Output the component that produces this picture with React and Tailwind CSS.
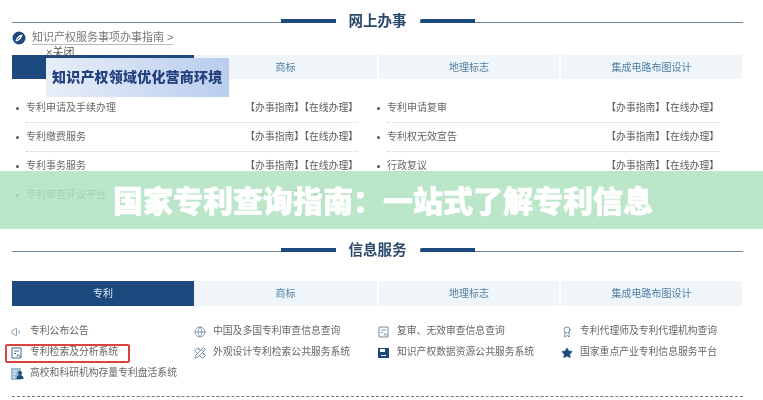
import { Volume1, Globe, PencilRuler, Award, Star } from "lucide-react";

const tabs = [
  ["专利", "w-[182px] bg-[#1c4a7e] text-[#dfe8f2]"],
  ["商标", "w-[183px] bg-[#f0f5f9] text-[#4f7da3]"],
  ["地理标志", "ml-[2px] w-[180px] bg-[#f0f5f9] text-[#4f7da3]"],
  ["集成电路布图设计", "ml-[2px] w-[181px] bg-[#f0f5f9] text-[#4f7da3]"],
];

const handleRows = [
  ["专利申请及手续办理", "专利申请复审"],
  ["专利缴费服务", "专利权无效宣告"],
  ["专利事务服务", "行政复议"],
  ["专利审查评议平台", ""],
];

// page with a small mark, used by the search and review systems
function DocIcon({ className }) {
  return (
    <svg width="11" height="12" viewBox="0 0 11 12" fill="none" stroke="currentColor" className={className}>
      <path d="M1 1h9v10H1z" strokeWidth="1" />
      <path d="M3 4h5M3 6.5h2" strokeWidth="0.9" />
      <path d="M6 9.5l1-2 2.5 2.5" strokeWidth="1" />
    </svg>
  );
}

function SaveIcon({ className }) {
  return (
    <svg width="11" height="12" viewBox="0 0 11 12" className={className}>
      <path d="M0 1h11v10H0z" fill="currentColor" />
      <path d="M2 2h5v3H2z" fill="#fff" />
      <path d="M3 8h5v1H3z" fill="#fff" />
    </svg>
  );
}

function PersonDocIcon({ className }) {
  return (
    <svg width="13" height="12" viewBox="0 0 13 12" className={className}>
      <path d="M0 0h10v12H0z" fill="#9db8cf" />
      <path d="M2 3h4M2 6h3M2 9h2" stroke="#fff" strokeWidth="1" />
      <circle cx="9" cy="5" r="2" fill="#1c4a7e" />
      <path d="M5.5 11c0-3 1.5-4 3.5-4s3.5 1 3.5 4z" fill="#1c4a7e" />
    </svg>
  );
}

const services = [
  [
    [Volume1, "专利公布公告", "text-[#5d7a96]"],
    [Globe, "中国及多国专利审查信息查询", "text-[#5d7a96]"],
    [DocIcon, "复审、无效审查信息查询", "text-[#6f8ba5]"],
    [Award, "专利代理师及专利代理机构查询", "text-[#3c6690]"],
  ],
  [
    [DocIcon, "专利检索及分析系统", "text-[#3c6690]"],
    [PencilRuler, "外观设计专利检索公共服务系统", "text-[#3c6690]"],
    [SaveIcon, "知识产权数据资源公共服务系统", "text-[#1c4a7e]"],
    [Star, "国家重点产业专利信息服务平台", "text-[#1c4a7e] fill-[#1c4a7e]"],
  ],
  [[PersonDocIcon, "高校和科研机构存量专利盘活系统", ""]],
];

function SectionTitle({ title, className }) {
  return (
    <div className={`flex items-center h-[14px] pl-3 pr-5 ${className}`}>
      <div className="flex-1 relative h-px mt-[3px] bg-[#6f8299]">
        <div className="absolute right-0 -top-[3px] w-[55px] h-[4px] bg-[#1c4a7e]"></div>
      </div>
      <div className="w-[84px] text-center text-[14.5px] leading-[14px] font-bold text-[#2b4a6b]">{title}</div>
      <div className="flex-1 relative h-px mt-[3px] bg-[#6f8299]">
        <div className="absolute left-0 -top-[3px] w-[55px] h-[4px] rounded-l bg-[#1c4a7e]"></div>
      </div>
    </div>
  );
}

function Tabs({ className }) {
  return (
    <div className={`flex ml-3 text-[10px] ${className}`}>
      {tabs.map(([tab, color]) => (
        <div key={tab} className={`flex items-center justify-center ${color}`}>
          {tab}
        </div>
      ))}
    </div>
  );
}

function HandleCell({ name }) {
  return (
    <div className="flex items-center h-[29px] pl-1 text-[10px] leading-[14px] text-[#666]">
      <span className="w-[3px] h-[3px] rounded-full bg-[#555] mr-[7px] shrink-0"></span>
      <div className="w-[332px] h-full flex items-center justify-between border-b border-dotted border-[#cfd4d8]">
        <span>{name}</span>
        <span className="text-[9.8px] leading-[14px] text-[#5a5a5a]">【办事指南】【在线办理】</span>
      </div>
    </div>
  );
}

export default function App() {
  return (
    <div className="relative w-[763px] h-[400px] overflow-hidden bg-white font-['Liberation_Sans','Noto_Sans_CJK_SC',sans-serif] blur-[0.35px]">
      <SectionTitle title="网上办事" className="mt-[14px]" />

      <div className="flex items-center h-[16px] mt-[2px] pl-3 text-[11px] text-[#777]">
        <svg width="14" height="14" viewBox="0 0 14 14">
          <circle cx="7" cy="7" r="6.5" fill="#1c4a7e" />
          <path d="M3.5 10.5C4 7 6.5 4 10.5 3.5 10 7 7.5 10 3.5 10.5z" fill="#fff" />
          <path d="M5 9l3-3" stroke="#1c4a7e" strokeWidth="0.8" />
        </svg>
        <span className="ml-[6px] border-b border-[#bbb] leading-[13px]">知识产权服务事项办事指南 &gt;</span>
      </div>

      <Tabs className="mt-[9px] h-[24px]" />

      <div className="mt-[15px] ml-3 grid grid-cols-[361px_346px]">
        {handleRows.map((row) =>
          row.map((name, i) =>
            name ? <HandleCell key={name} name={name} /> : <div key={i}></div>
          )
        )}
      </div>

      <SectionTitle title="信息服务" className="mt-[33px]" />

      <Tabs className="mt-[24px] h-[25px]" />

      <div className="mt-[15px] pl-[11px] grid grid-cols-[183px_184px_183px_1fr] auto-rows-[21px] text-[9.8px] text-[#666]">
        {services.flat().map(([Icon, label, color]) => (
          <div key={label} className="flex items-center">
            <span className="w-[19px] shrink-0 flex items-center">
              <Icon size={12} strokeWidth={1.4} className={color} />
            </span>
            <span>{label}</span>
          </div>
        ))}
      </div>

      <div className="ml-3 mr-5 mt-[12px] border-t border-dashed border-[#777]"></div>

      {/* red box around the highlighted system */}
      <div className="absolute left-[5px] top-[344px] w-[125px] h-[19px] border-2 border-[#d9443f] rounded-[2px]"></div>

      {/* floating ad */}
      <div className="absolute left-[46px] top-[46px] text-[11px] leading-[12px] text-[#555]">×关闭</div>
      <div className="absolute left-[46px] top-[58px] w-[183px] h-[39px] bg-gradient-to-r from-[#e8eef8] to-[#b9cdee] flex items-center pl-[6px] text-[14px] font-black whitespace-nowrap text-[#24407f] tracking-[0.2px]">
        知识产权领域优化营商环境
      </div>

      {/* title banner */}
      <div className="absolute left-0 right-0 top-[171px] h-[58px] bg-[#afe2c0]/85 flex items-center pl-[113px] pt-[3px] text-[30px] font-black text-white [-webkit-text-stroke:0.6px_white]">
        国家专利查询指南：一站式了解专利信息
      </div>
    </div>
  );
}
